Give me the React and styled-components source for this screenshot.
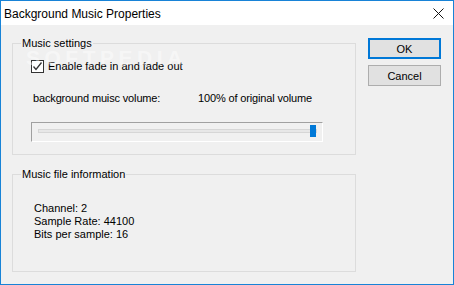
import React from "react";
import styled, { createGlobalStyle } from "styled-components";

const GlobalStyle = createGlobalStyle`
  html, body {
    margin: 0;
    padding: 0;
    background: #f0f0f0;
  }
  body {
    font-family: "Liberation Sans", Arial, sans-serif;
    font-size: 11px;
    color: #000;
  }
`;

const Window = styled.div`
  position: relative;
  width: 454px;
  height: 285px;
  box-sizing: border-box;
  border: 1px solid #1883d7;
  background: #f0f0f0;
  display: flex;
  flex-direction: column;
  overflow: hidden;
`;

const TitleBar = styled.div`
  height: 24px;
  background: #fff;
  display: flex;
  align-items: center;
  justify-content: space-between;
  padding: 0 9px 0 3px;
`;

const Title = styled.span`
  font-family: "Liberation Sans", Arial, sans-serif;
  font-size: 12px;
  line-height: 16px;
  margin-top: 1px;
`;

const Body = styled.div`
  flex: 1;
  display: flex;
  gap: 12px;
  padding: 12px 11px 0 11px;
`;

const Column = styled.div`
  display: flex;
  flex-direction: column;
  width: 344px;
`;

const Group = styled.fieldset`
  box-sizing: border-box;
  margin: ${(p) => p.$mt || 0}px 0 0 0;
  padding: 0;
  height: ${(p) => p.$h}px;
  border: 1px solid #dcdcdc;
  min-width: 0;
`;

const Legend = styled.legend`
  margin-left: 8px;
  padding: 0 1px;
  line-height: 13px;
`;

const GroupContent = styled.div`
  padding: ${(p) => p.$pt}px 0 0 ${(p) => p.$pl}px;
`;

const CheckRow = styled.label`
  display: flex;
  align-items: center;
  gap: 4px;
  height: 13px;
  line-height: 13px;
`;

const Box = styled.span`
  width: 13px;
  height: 13px;
  box-sizing: border-box;
  border: 1px solid #333;
  background: #fff;
  display: flex;
  align-items: center;
  justify-content: center;
`;

const VolumeRow = styled.div`
  display: flex;
  margin: 19px 0 0 2px;
  line-height: 13px;
  letter-spacing: -0.15px;
`;

const VolumeLabel = styled.span`
  width: 165px;
`;

const Slider = styled.div`
  position: relative;
  width: 292px;
  height: 20px;
  box-sizing: border-box;
  margin-top: 17px;
  border-top: 1px solid #a0a0a0;
  border-left: 1px solid #a0a0a0;
  border-bottom: 1px solid #fff;
  border-right: 1px solid #fff;
  padding: 6px 5px 0 6px;
`;

const Track = styled.div`
  height: 4px;
  box-sizing: border-box;
  border: 1px solid #d6d6d6;
  background: #e7e7e7;
`;

const Thumb = styled.div`
  position: absolute;
  top: 2px;
  right: 6px;
  width: 6px;
  height: 12px;
  background: #0078d7;
`;

const InfoLine = styled.div`
  line-height: 13px;
`;

const Buttons = styled.div`
  display: flex;
  flex-direction: column;
  gap: 6px;
  padding-top: 1px;
`;

const Button = styled.button`
  width: 73px;
  height: 21px;
  box-sizing: border-box;
  background: #e1e1e1;
  border: ${(p) => (p.$default ? "2px solid #0078d7" : "1px solid #adadad")};
  font-family: "Liberation Sans", Arial, sans-serif;
  font-size: 11px;
  color: #000;
  padding: 0;
`;

const Watermark = styled.div`
  position: absolute;
  left: 25px;
  top: 45px;
  font-family: "Liberation Sans", Arial, sans-serif;
  font-weight: bold;
  font-size: 21px;
  letter-spacing: 4.5px;
  color: rgba(255, 255, 255, 0.45);
  pointer-events: none;
`;

export default function App() {
  return (
    <>
      <GlobalStyle />
      <Window>
        <TitleBar>
          <Title>Background Music Properties</Title>
          <svg width="11" height="11" viewBox="0 0 11 11">
            <path d="M0.5 0.5 L10.5 10.5 M10.5 0.5 L0.5 10.5" stroke="#111" strokeWidth="1" />
          </svg>
        </TitleBar>
        <Body>
          <Column>
            <Group $h={118}>
              <Legend>Music settings</Legend>
              <GroupContent $pt={10} $pl={18}>
                <CheckRow>
                  <Box>
                    <svg width="11" height="11" viewBox="0 0 11 11">
                      <path d="M1.5 5.5 L4 8.5 L9.5 1.5" fill="none" stroke="#333" strokeWidth="1.3" />
                    </svg>
                  </Box>
                  Enable fade in and fade out
                </CheckRow>
                <VolumeRow>
                  <VolumeLabel>background muisc volume:</VolumeLabel>
                  <span>100% of original volume</span>
                </VolumeRow>
                <Slider>
                  <Track />
                  <Thumb />
                </Slider>
              </GroupContent>
            </Group>
            <Group $mt={13} $h={104}>
              <Legend>Music file information</Legend>
              <GroupContent $pt={21} $pl={21}>
                <InfoLine>Channel: 2</InfoLine>
                <InfoLine>Sample Rate: 44100</InfoLine>
                <InfoLine>Bits per sample: 16</InfoLine>
              </GroupContent>
            </Group>
          </Column>
          <Buttons>
            <Button $default>OK</Button>
            <Button>Cancel</Button>
          </Buttons>
        </Body>
        <Watermark>SOFTPEDIA</Watermark>
      </Window>
    </>
  );
}
